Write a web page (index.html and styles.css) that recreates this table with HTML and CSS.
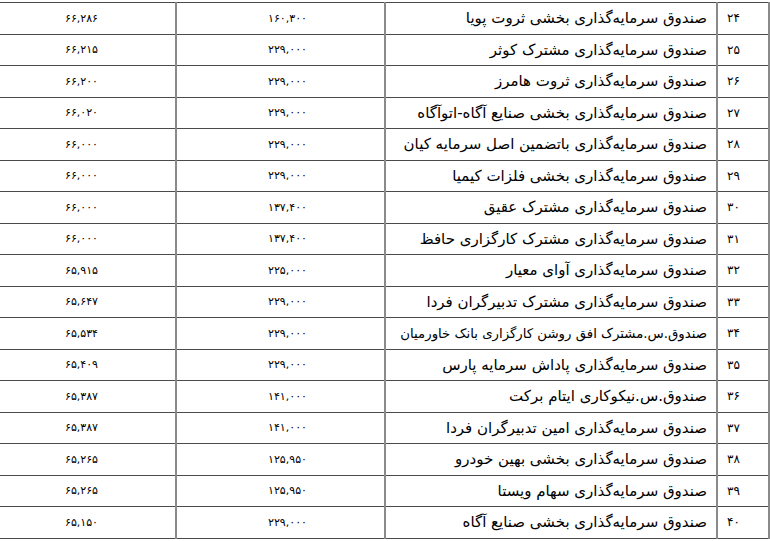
FILE: index.html
```html
<!DOCTYPE html>
<html lang="fa" dir="rtl">
<head>
<meta charset="utf-8">
<link rel="stylesheet" href="styles.css">
</head>
<body>
<table class="grid">
<colgroup><col class="c-num"><col class="c-name"><col class="c-val"><col class="c-val2"></colgroup>
<tbody>
<tr><td class="num">۲۴</td><td class="name">صندوق سرمایه‌گذاری بخشی ثروت پویا</td><td class="val">۱۶۰,۳۰۰</td><td class="val2">۶۶,۲۸۶</td></tr>
<tr><td class="num">۲۵</td><td class="name">صندوق سرمایه‌گذاری مشترک کوثر</td><td class="val">۲۲۹,۰۰۰</td><td class="val2">۶۶,۲۱۵</td></tr>
<tr><td class="num">۲۶</td><td class="name">صندوق سرمایه‌گذاری ثروت هامرز</td><td class="val">۲۲۹,۰۰۰</td><td class="val2">۶۶,۲۰۰</td></tr>
<tr><td class="num">۲۷</td><td class="name">صندوق سرمایه‌گذاری بخشی صنایع آگاه-اتوآگاه</td><td class="val">۲۲۹,۰۰۰</td><td class="val2">۶۶,۰۲۰</td></tr>
<tr><td class="num">۲۸</td><td class="name">صندوق سرمایه‌گذاری باتضمین اصل سرمایه کیان</td><td class="val">۲۲۹,۰۰۰</td><td class="val2">۶۶,۰۰۰</td></tr>
<tr><td class="num">۲۹</td><td class="name">صندوق سرمایه‌گذاری بخشی فلزات کیمیا</td><td class="val">۲۲۹,۰۰۰</td><td class="val2">۶۶,۰۰۰</td></tr>
<tr><td class="num">۳۰</td><td class="name">صندوق سرمایه‌گذاری مشترک عقیق</td><td class="val">۱۳۷,۴۰۰</td><td class="val2">۶۶,۰۰۰</td></tr>
<tr><td class="num">۳۱</td><td class="name">صندوق سرمایه‌گذاری مشترک کارگزاری حافظ</td><td class="val">۱۳۷,۴۰۰</td><td class="val2">۶۶,۰۰۰</td></tr>
<tr><td class="num">۳۲</td><td class="name">صندوق سرمایه‌گذاری آوای معیار</td><td class="val">۲۲۵,۰۰۰</td><td class="val2">۶۵,۹۱۵</td></tr>
<tr><td class="num">۳۳</td><td class="name">صندوق سرمایه‌گذاری مشترک تدبیرگران فردا</td><td class="val">۲۲۹,۰۰۰</td><td class="val2">۶۵,۶۴۷</td></tr>
<tr><td class="num">۳۴</td><td class="name name-long">صندوق.س.مشترک افق روشن کارگزاری بانک خاورمیان</td><td class="val">۲۲۹,۰۰۰</td><td class="val2">۶۵,۵۳۴</td></tr>
<tr><td class="num">۳۵</td><td class="name">صندوق سرمایه‌گذاری پاداش سرمایه پارس</td><td class="val">۲۲۹,۰۰۰</td><td class="val2">۶۵,۴۰۹</td></tr>
<tr><td class="num">۳۶</td><td class="name">صندوق.س.نیکوکاری ایتام برکت</td><td class="val">۱۴۱,۰۰۰</td><td class="val2">۶۵,۳۸۷</td></tr>
<tr><td class="num">۳۷</td><td class="name">صندوق سرمایه‌گذاری امین تدبیرگران فردا</td><td class="val">۱۴۱,۰۰۰</td><td class="val2">۶۵,۳۸۷</td></tr>
<tr><td class="num">۳۸</td><td class="name">صندوق سرمایه‌گذاری بخشی بهین خودرو</td><td class="val">۱۲۵,۹۵۰</td><td class="val2">۶۵,۲۶۵</td></tr>
<tr><td class="num">۳۹</td><td class="name">صندوق سرمایه‌گذاری سهام ویستا</td><td class="val">۱۲۵,۹۵۰</td><td class="val2">۶۵,۲۶۵</td></tr>
<tr><td class="num">۴۰</td><td class="name">صندوق سرمایه‌گذاری بخشی صنایع آگاه</td><td class="val">۲۲۹,۰۰۰</td><td class="val2">۶۵,۱۵۰</td></tr>
</tbody>
</table>
</body>
</html>
```
FILE: styles.css
```css
html, body {
  margin: 0;
  padding: 0;
  background: #ffffff;
}
body {
  padding-top: 2px;
  font-family: "DejaVu Sans", sans-serif;
  color: #000;
}
.grid {
  width: 770px;
  border-collapse: collapse;
  table-layout: fixed;
  direction: rtl;
}
.c-num { width: 52px; }
.c-name { width: 332px; }
.c-val { width: 209px; }
.c-val2 { width: 177px; }
.grid td {
  height: 30.5px;
  padding: 0;
  border-top: 1px solid #4a4a4a;
  border-bottom: 1px solid #4a4a4a;
  border-left: 2px solid #8a8a8a;
  border-right: 2px solid #8a8a8a;
  vertical-align: middle;
  white-space: nowrap;
  overflow: hidden;
}
.num {
  font-size: 12px;
  text-align: right;
  padding-right: 28px !important;
}
.name {
  font-size: 15px;
  text-align: right;
  padding-right: 9px !important;
}
.name-long {
  font-size: 13.3px;
}
.val {
  font-size: 11px;
  text-align: center;
  padding-left: 14px !important;
}
.val2 {
  font-size: 11px;
  text-align: center;
  padding-right: 12px !important;
}
```
